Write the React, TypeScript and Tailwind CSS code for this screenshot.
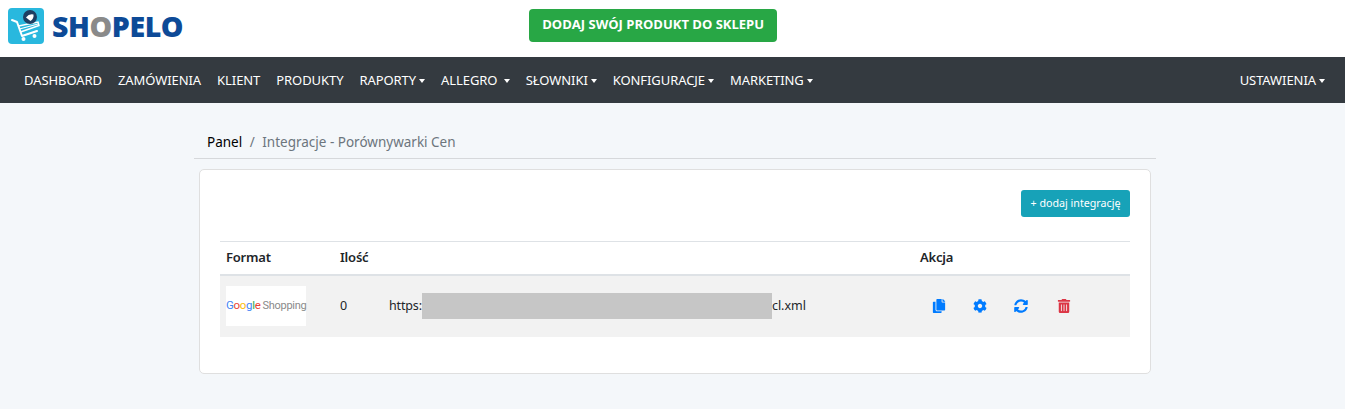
import { FaCopy, FaCog, FaSyncAlt, FaTrashAlt } from "react-icons/fa";

const navLeft = [
  { label: "DASHBOARD" },
  { label: "ZAMÓWIENIA" },
  { label: "KLIENT" },
  { label: "PRODUKTY" },
  { label: "RAPORTY", caret: true },
  { label: "ALLEGRO ", caret: true },
  { label: "SŁOWNIKI", caret: true },
  { label: "KONFIGURACJE", caret: true },
  { label: "MARKETING", caret: true },
];

const Caret = () => (
  <span className="ml-[3px] inline-block h-0 w-0 border-x-[3.5px] border-t-[4px] border-x-transparent border-t-white align-[2px]" />
);

const Logo = () => (
  <div className="flex items-center">
    <svg width="36" height="36" viewBox="0 0 36 36" className="shrink-0">
      <rect width="36" height="36" rx="4" fill="#29b8de" />
      <path d="M4 12 L9 14 L14 28 L29 23" fill="none" stroke="#fff" strokeWidth="2" strokeLinecap="round" strokeLinejoin="round" />
      <path d="M10.5 18 L30 14 L31 17.5 L12.5 24" fill="none" stroke="#fff" strokeWidth="1.5" />
      <path d="M11.5 21 L30 16" stroke="#fff" strokeWidth="1.2" />
      <circle cx="15.5" cy="31" r="2" fill="#fff" />
      <circle cx="26.5" cy="28" r="2" fill="#fff" />
      <circle cx="22" cy="9" r="7" fill="#1d3f63" />
      <path d="M18 9.5 Q21 5.5 25.5 6.5 Q26 10.5 22.5 13 Z" fill="#fff" />
    </svg>
    <span className="ml-2 font-['Open_Sans',sans-serif] text-[28.5px] leading-none font-extrabold tracking-[-0.4px] text-[#0d4a97]">
      SH<span className="text-[#8a8a8a]">O</span>PELO
    </span>
  </div>
);

const GoogleShopping = () => (
  <div className="flex h-10 w-20 items-center bg-white font-['Roboto',sans-serif] text-[11px] tracking-[-0.3px] whitespace-nowrap">
    <span className="text-[11.5px]">
      <span className="text-[#4285f4]">G</span>
      <span className="text-[#ea4335]">o</span>
      <span className="text-[#fbbc05]">o</span>
      <span className="text-[#4285f4]">g</span>
      <span className="text-[#34a853]">l</span>
      <span className="text-[#ea4335]">e</span>
    </span>
    <span className="ml-[2px] text-[#8a8a8a]">Shopping</span>
  </div>
);

export default function App() {
  return (
    <div className="h-[409px] overflow-hidden bg-[#f4f7fa] font-['Noto_Sans',sans-serif] text-[12.5px] text-[#212529]">
      <header className="flex h-[57px] items-center bg-white pb-[5px] pl-2">
        <Logo />
        <button className="mb-[2px] ml-[346px] h-[33px] w-[248px] rounded bg-[#28a745] font-['Open_Sans',sans-serif] text-[13px] font-bold text-white">
          DODAJ SWÓJ PRODUKT DO SKLEPU
        </button>
      </header>

      <nav className="flex h-[46px] items-center justify-between bg-[#343a40] pt-[2px] pr-5 pl-6 text-[13px] tracking-[-0.07px] text-white">
        <ul className="flex gap-4">
          {navLeft.map((item) => (
            <li key={item.label} className="whitespace-pre">
              {item.label}
              {item.caret && <Caret />}
            </li>
          ))}
        </ul>
        <div>
          USTAWIENIA
          <Caret />
        </div>
      </nav>

      <main className="ml-[194px] w-[962px] pt-[25px]">
        <div className="flex h-[31px] items-center border-b border-[#d6d8db] pb-[2px] pl-[13px] text-[13.5px]">
          <span className="text-black">Panel</span>
          <span className="mx-[7.5px] text-[#6c757d]">/</span>
          <span className="text-[#6c757d]">Integracje - Porównywarki Cen</span>
        </div>

        <section className="mt-[10px] ml-[5px] h-[205px] w-[952px] rounded-[5px] border border-[#dfdfdf] bg-white px-5 pt-5">
          <div className="flex justify-end">
            <button className="h-[27px] w-[109px] rounded-[3px] bg-[#17a2b8] text-[10.7px] text-white">
              + dodaj integrację
            </button>
          </div>

          <table className="mt-6 w-[910px] table-fixed border-collapse">
            <thead>
              <tr className="h-[33px] border-t border-b-2 border-t-[#dee2e6] border-b-[#dee2e6] text-left">
                <th className="w-[114px] pl-[6px] text-[13px] font-semibold tracking-[-0.2px]">Format</th>
                <th className="w-[49px] pl-[6px] text-[13px] font-semibold tracking-[-0.2px]">Ilość</th>
                <th className="w-[531px]" />
                <th className="pl-[6px] text-[13px] font-semibold tracking-[-0.2px]">Akcja</th>
              </tr>
            </thead>
            <tbody>
              <tr className="h-[62px] bg-[#f2f2f2]">
                <td className="pl-[6px]">
                  <GoogleShopping />
                </td>
                <td className="pl-[6px]">0</td>
                <td className="pl-[6px]">
                  <div className="flex items-center">
                    <span className="tracking-[-0.15px]">https:</span>
                    <span className="h-[26px] w-[350px] bg-[#c6c6c6]" />
                    <span>cl.xml</span>
                  </div>
                </td>
                <td className="pl-[6px]">
                  <div className="flex items-center pl-[12px] text-[14px]">
                    <span className="w-[41px]"><FaCopy className="text-[#007bff]" /></span>
                    <span className="w-[41px]"><FaCog className="text-[#007bff]" /></span>
                    <span className="w-[43px]"><FaSyncAlt className="text-[#007bff]" /></span>
                    <FaTrashAlt className="text-[#dc3545]" />
                  </div>
                </td>
              </tr>
            </tbody>
          </table>
        </section>
      </main>
    </div>
  );
}
